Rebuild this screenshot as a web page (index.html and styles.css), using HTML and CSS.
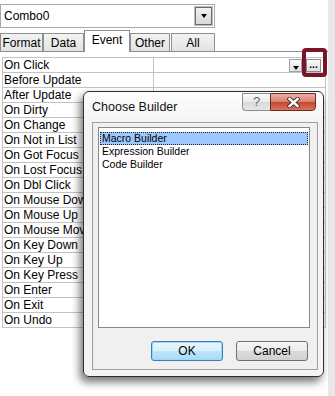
FILE: index.html
```html
<!DOCTYPE html>
<html lang="en">

<head>
    <meta charset="UTF-8">
    <meta name="viewport" content="width=device-width, initial-scale=1.0">
    <title>Property Sheet</title>
    <link rel="stylesheet" href="styles.css">
</head>

<body>
    <div class="sheet">
        <div class="pane">
            <div class="combo">
                <span class="combo-text">Combo0</span>
                <span class="combo-btn"><span class="arrow"></span></span>
            </div>

            <div class="tabs">
                <span class="tab tab-format">Format</span>
                <span class="tab tab-data">Data</span>
                <span class="tab tab-event active">Event</span>
                <span class="tab tab-other">Other</span>
                <span class="tab tab-all">All</span>
            </div>

            <div class="props">
                <div class="row">
                    <div class="name">On Click</div>
                    <div class="value">
                        <span class="pick"><span class="arrow"></span></span>
                        <span class="build"><span class="dots">...</span></span>
                    </div>
                </div>
                <div class="row"><div class="name">Before Update</div><div class="value"></div></div>
                <div class="row"><div class="name">After Update</div><div class="value"></div></div>
                <div class="row"><div class="name">On Dirty</div><div class="value"></div></div>
                <div class="row"><div class="name">On Change</div><div class="value"></div></div>
                <div class="row"><div class="name">On Not in List</div><div class="value"></div></div>
                <div class="row"><div class="name">On Got Focus</div><div class="value"></div></div>
                <div class="row"><div class="name">On Lost Focus</div><div class="value"></div></div>
                <div class="row"><div class="name">On Dbl Click</div><div class="value"></div></div>
                <div class="row"><div class="name">On Mouse Down</div><div class="value"></div></div>
                <div class="row"><div class="name">On Mouse Up</div><div class="value"></div></div>
                <div class="row"><div class="name">On Mouse Move</div><div class="value"></div></div>
                <div class="row"><div class="name">On Key Down</div><div class="value"></div></div>
                <div class="row"><div class="name">On Key Up</div><div class="value"></div></div>
                <div class="row"><div class="name">On Key Press</div><div class="value"></div></div>
                <div class="row"><div class="name">On Enter</div><div class="value"></div></div>
                <div class="row"><div class="name">On Exit</div><div class="value"></div></div>
                <div class="row"><div class="name">On Undo</div><div class="value"></div></div>
            </div>

            <!-- callout round the builder button -->
            <div class="highlight"></div>

            <div class="dialog">
                <div class="titlebar">
                    <span class="title">Choose Builder</span>
                    <div class="caption">
                        <span class="cap-help">?</span>
                        <span class="cap-close">
                            <svg width="13" height="11" viewBox="0 0 13 11">
                                <path d="M2.5 2 L10.5 9 M10.5 2 L2.5 9" stroke="#3b2a28" stroke-width="4.2" stroke-linecap="square" />
                                <path d="M2.5 2 L10.5 9 M10.5 2 L2.5 9" stroke="#fff" stroke-width="2.4" stroke-linecap="square" />
                            </svg>
                        </span>
                    </div>
                </div>
                <div class="client">
                    <div class="listbox">
                        <div class="item selected">Macro Builder</div>
                        <div class="item">Expression Builder</div>
                        <div class="item">Code Builder</div>
                    </div>
                    <div class="buttons">
                        <span class="btn btn-ok">OK</span>
                        <span class="btn">Cancel</span>
                    </div>
                </div>
            </div>
        </div>
        <div class="scroll"></div>
    </div>
</body>

</html>
```

FILE: styles.css
```css
/**** DEFAULTS ****/

* {
    padding: 0;
    margin: 0;
    box-sizing: border-box;
}

html {
    font-size: 12px;
    font-family: "Liberation Sans", Arial, sans-serif;
    color: #000;
}

body {
    background-color: #fff;
}

.sheet {
    display: flex;
    height: 396px;
    overflow: hidden;
}

.pane {
    position: relative;
    width: 328px;
}

.scroll {
    width: 7px;
    background-color: #e8e8e8;
}

.arrow {
    width: 0;
    height: 0;
    border-top: 4px solid #000;
    border-left: 3.5px solid transparent;
    border-right: 3.5px solid transparent;
}

/**** COMBO ****/

.combo {
    margin-top: 4px;
    width: 215px;
    height: 24px;
    border: 1px solid #a9a9a9;
    display: flex;
    align-items: center;
    justify-content: space-between;
    padding: 0 1px 0 3px;
}

.combo-btn {
    width: 19px;
    height: 20px;
    border: 1px solid #bdbdbd;
    box-shadow: inset 0 0 0 1px #6d6d6d;
    background: linear-gradient(#f4f4f4, #d6d6d6);
    display: flex;
    align-items: center;
    justify-content: center;
}

/**** TABS ****/

.tabs {
    margin-top: 3px;
    height: 21px;
    border-bottom: 1px solid #8e8f8f;
    display: flex;
    align-items: flex-end;
}

.tab {
    height: 19px;
    margin-bottom: -1px;
    border: 1px solid #8e8f8f;
    background: linear-gradient(#f3f3f3, #e3e3e3);
    display: flex;
    align-items: center;
    justify-content: center;
    line-height: 1;
    padding-top: 1px;
}

.tab-format {
    width: 43px;
}

.tab-data {
    width: 41px;
}

.tab-event {
    width: 46px;
}

.tab-other {
    width: 40px;
}

.tab-all {
    width: 44px;
    margin-left: 1px;
}

.tab.active {
    height: 22px;
    background: #fff;
    border-bottom: none;
    padding: 0 0 4px;
}

/**** PROPERTY GRID ****/

.props {
    margin: 5px 0 0 2px;
    width: 324px;
    border-top: 1px solid #c3c3c3;
    border-left: 1px solid #c3c3c3;
    border-right: 1px solid #c3c3c3;
}

.row {
    display: flex;
    height: 15px;
    border-bottom: 1px solid #c3c3c3;
}

.name {
    width: 151px;
    border-right: 1px solid #c3c3c3;
    padding-left: 1px;
    line-height: 14px;
    white-space: nowrap;
    overflow: hidden;
}

.value {
    flex: 1;
    display: flex;
    align-items: center;
    justify-content: flex-end;
    gap: 4px;
    padding-right: 4px;
}

.pick {
    width: 13px;
    height: 13px;
    border: 1px solid #a0a0a0;
    background: linear-gradient(#fafafa, #e4e4e4);
    display: flex;
    align-items: flex-end;
    justify-content: center;
    padding-bottom: 1px;
}

.build {
    width: 15px;
    height: 13px;
    border: 1px solid #8a8a8a;
    background: linear-gradient(#fbfbfb, #dedede);
    display: flex;
    align-items: center;
    justify-content: center;
}

.dots {
    font-size: 10px;
    font-weight: bold;
    line-height: 1;
    letter-spacing: 0;
}

.highlight {
    position: absolute;
    left: 302px;
    top: 48px;
    width: 25px;
    height: 29px;
    border: 4px solid #7b1426;
    border-radius: 4px;
}

/**** DIALOG ****/

.dialog {
    position: absolute;
    left: 83px;
    top: 91px;
    width: 241px;
    height: 286px;
    border: 1px solid #2f2f2f;
    border-radius: 6px;
    background: linear-gradient(#fdfdfd, #f4f4f4 30px, #f4f4f4);
    box-shadow: -3px 5px 9px rgba(0, 0, 0, 0.55);
    display: flex;
    flex-direction: column;
}

.titlebar {
    position: relative;
    height: 30px;
    padding: 0 0 1px 8px;
    display: flex;
    align-items: center;
}

.title {
    font-size: 12.5px;
    color: #111;
}

.caption {
    position: absolute;
    top: 1px;
    right: 7px;
    display: flex;
    height: 18px;
}

.cap-help {
    width: 28px;
    border: 1px solid #8d8d8d;
    border-right: none;
    border-radius: 0 0 0 4px;
    background: linear-gradient(#fafafa, #e9e9e9 50%, #d9d9d9 50%, #e6e6e6);
    color: #666;
    font-size: 13px;
    line-height: 16px;
    text-align: center;
}

.cap-close {
    width: 46px;
    border: 1px solid #6e2a22;
    border-radius: 0 0 4px 0;
    background: linear-gradient(#eab3a6, #d8806e 48%, #c6452f 52%, #d6755e);
    display: flex;
    align-items: center;
    justify-content: center;
}

.client {
    flex: 1;
    margin: 0 5px 6px 8px;
    border: 1px solid #a0a0a0;
    background-color: #f0f0f0;
    display: flex;
    flex-direction: column;
    padding: 4px 7px 8px 5px;
}

.listbox {
    flex: 1;
    border: 1px solid #828790;
    background-color: #fff;
    padding: 4px 1px;
}

.item {
    height: 13px;
    line-height: 13px;
    padding-left: 2px;
    font-size: 10.5px;
    white-space: nowrap;
}

.selected {
    background-color: #9cc8ff;
    outline: 1px dotted #222;
    outline-offset: -1px;
}

.buttons {
    margin-top: 13px;
    display: flex;
    justify-content: flex-end;
    gap: 13px;
    padding-right: 2px;
}

.btn {
    width: 72px;
    height: 20px;
    border: 1px solid #707070;
    border-radius: 3px;
    background: linear-gradient(#f4f4f4, #ebebeb 50%, #dcdcdc 50%, #d0d0d0);
    text-align: center;
    line-height: 18px;
}

.btn-ok {
    border-color: #3c7fb1;
    background: linear-gradient(#eaf6fd, #d9f0fc 50%, #bee6fd 50%, #a9daf5);
    box-shadow: inset 0 0 0 1px #9fd8f5;
}
```
